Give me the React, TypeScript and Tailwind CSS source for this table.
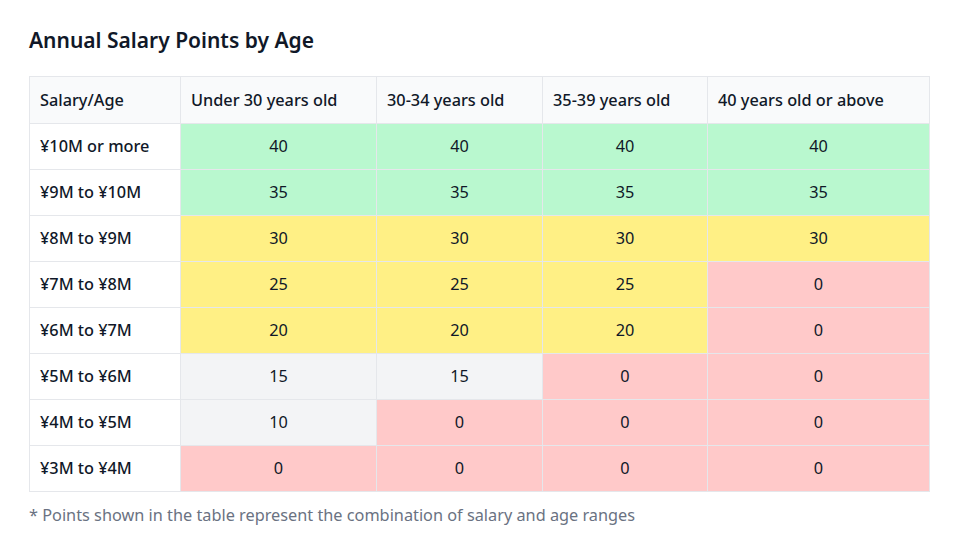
import React from "react";

const ages = [
  "Under 30 years old",
  "30-34 years old",
  "35-39 years old",
  "40 years old or above",
];

const rows: { label: string; points: number[] }[] = [
  { label: "¥10M or more", points: [40, 40, 40, 40] },
  { label: "¥9M to ¥10M", points: [35, 35, 35, 35] },
  { label: "¥8M to ¥9M", points: [30, 30, 30, 30] },
  { label: "¥7M to ¥8M", points: [25, 25, 25, 0] },
  { label: "¥6M to ¥7M", points: [20, 20, 20, 0] },
  { label: "¥5M to ¥6M", points: [15, 15, 0, 0] },
  { label: "¥4M to ¥5M", points: [10, 0, 0, 0] },
  { label: "¥3M to ¥4M", points: [0, 0, 0, 0] },
];

const colWidths = ["w-[151px]", "w-[196px]", "w-[166px]", "w-[165px]", "w-[222px]"];

function cellColor(p: number) {
  if (p >= 35) return "bg-green-200";
  if (p >= 20) return "bg-yellow-200";
  if (p > 0) return "bg-gray-100";
  return "bg-red-200";
}

export default function App() {
  return (
    <div
      className="bg-white px-[29px] pt-[26px] text-gray-900"
      style={{ fontFamily: '"Noto Sans", "Open Sans", sans-serif' }}
    >
      <h2 className="text-[21px] font-semibold leading-7 mb-[22px]">Annual Salary Points by Age</h2>

      <table className="table-fixed border-collapse w-[900px] text-[16.3px]">
        <colgroup>
          {colWidths.map((w) => (
            <col key={w} className={w} />
          ))}
        </colgroup>
        <thead>
          <tr className="bg-gray-50">
            <th className="border border-gray-200 h-[47px] px-[10px] text-left font-medium">Salary/Age</th>
            {ages.map((a) => (
              <th key={a} className="border border-gray-200 h-[47px] px-[10px] text-left font-medium">
                {a}
              </th>
            ))}
          </tr>
        </thead>
        <tbody>
          {rows.map((row) => (
            <tr key={row.label}>
              <td className="border border-gray-200 h-[46px] px-[10px] font-medium">{row.label}</td>
              {row.points.map((p, i) => (
                <td key={i} className={`border border-gray-200 h-[46px] text-center ${cellColor(p)}`}>
                  {p}
                </td>
              ))}
            </tr>
          ))}
        </tbody>
      </table>

      <p className="mt-[11px] text-[16.3px] text-gray-500">
        * Points shown in the table represent the combination of salary and age ranges
      </p>
    </div>
  );
}
